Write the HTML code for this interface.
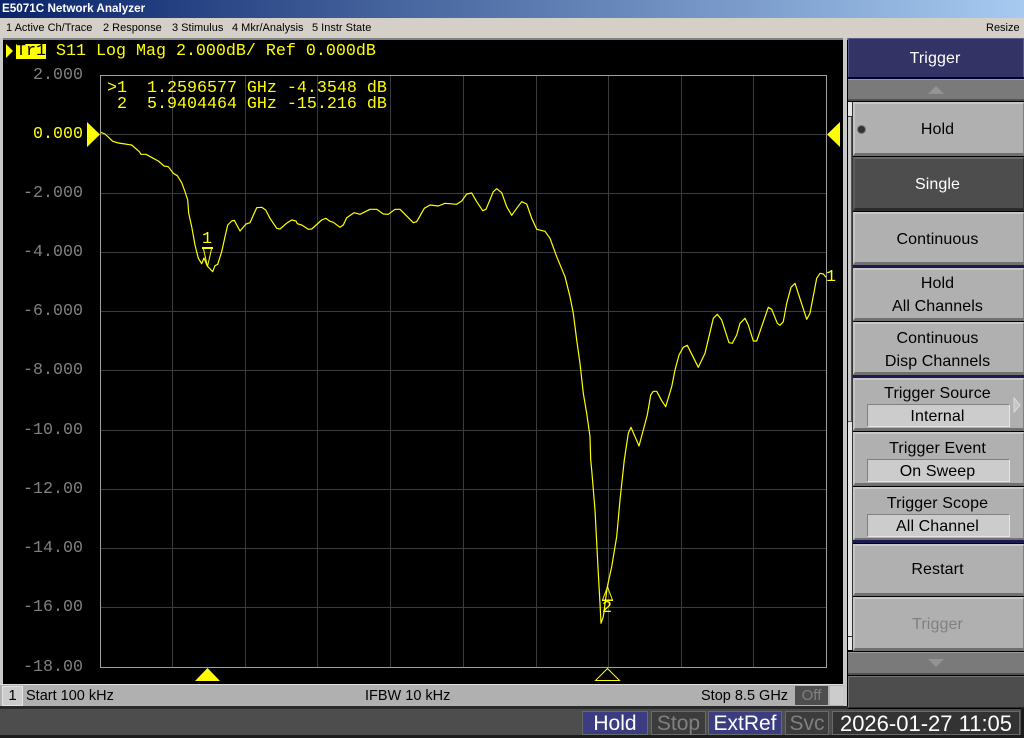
<!DOCTYPE html>
<html><head><meta charset="utf-8"><title>E5071C Network Analyzer</title>
<style>
html,body{margin:0;padding:0;width:1024px;height:738px;overflow:hidden;background:#000}
body{position:relative;font-family:"Liberation Sans",sans-serif}
div{position:absolute;box-sizing:border-box}
.t{white-space:pre;line-height:20px;height:20px}
.m{font-family:"Liberation Mono",monospace;font-size:16.667px;white-space:pre;line-height:16px;height:16px;color:#ffff00;margin-top:1px}
.a{font-family:"Liberation Mono",monospace;font-size:16.667px;white-space:pre;line-height:16px;height:16px;color:#808080;width:60px;right:941px;text-align:right;margin-top:1px}
.b{left:853px;width:171px;background:#b0b0b0;border-top:2px solid #c8c8c8;border-left:2px solid #c4c4c4;border-bottom:3px solid #707070;border-right:1px solid #808080}
.l{left:852px;width:171px;text-align:center;font-size:16px;letter-spacing:.1px;color:#000;white-space:pre;line-height:20px;height:20px}
.v{left:867px;width:143px;height:23px;background:#cccccc;border-top:1px solid #808080;border-left:1px solid #808080;border-bottom:1px solid #e6e6e6;border-right:1px solid #e6e6e6}
.s{top:711px;height:24px;border:1px solid #6a6a6a;font-size:21px;line-height:24px;text-align:center;white-space:pre}
</style></head><body>
<div style="left:0;top:0;width:1024px;height:18px;background:linear-gradient(90deg,#0a246a 0%,#a6caf0 100%)"></div>
<div class="t" style="left:2px;top:-1px;color:#fff;font-weight:bold;font-size:11.7px">E5071C Network Analyzer</div>
<div style="left:0;top:18px;width:1024px;height:20px;background:#d4d0c8"></div>
<div class="t" style="left:6px;top:18px;font-size:11px;color:#000">1 Active Ch/Trace</div>
<div class="t" style="left:103px;top:18px;font-size:11px;color:#000">2 Response</div>
<div class="t" style="left:172px;top:18px;font-size:11px;color:#000">3 Stimulus</div>
<div class="t" style="left:232px;top:18px;font-size:11px;color:#000">4 Mkr/Analysis</div>
<div class="t" style="left:312px;top:18px;font-size:11px;color:#000">5 Instr State</div>
<div class="t" style="left:986px;top:18px;font-size:11px;color:#000">Resize</div>

<div style="left:0;top:38px;width:848px;height:2px;background:#808080"></div>
<div style="left:0;top:38px;width:3px;height:648px;background:#c8c8c8"></div>
<div style="left:843px;top:38px;width:4px;height:648px;background:#c8c8c8"></div>
<div style="left:0;top:684px;width:847px;height:1px;background:#e0e0e0"></div>

<svg style="position:absolute;left:0;top:0" width="1024" height="738" viewBox="0 0 1024 738">
<g stroke="#3c3c3c" stroke-width="1" shape-rendering="crispEdges">
<path d="M172.5 75V667M245.5 75V667M317.5 75V667M390.5 75V667M463.5 75V667M536.5 75V667M608.5 75V667M681.5 75V667M753.5 75V667"/>
<path d="M100 134.500H826M100 193.500H826M100 252.500H826M100 311.500H826M100 370.500H826M100 430.500H826M100 489.500H826M100 548.500H826M100 607.500H826"/>
</g>
<rect x="100.500" y="75.500" width="726" height="592" fill="none" stroke="#a0a0a0" stroke-width="1" shape-rendering="crispEdges"/>
<polyline fill="none" stroke="#ffff00" stroke-width="1.200" stroke-linejoin="round" points="100.700,132.300 105,134 112.700,141.300 118.300,143 125,144 131.700,145 139.300,151.700 141,154.300 146,154.300 153.300,158.300 158.300,161 164,166 168.300,166.700 173.300,173.300 177.300,175.700 181.700,182.700 185,191.700 187.700,200 188.700,213.300 191.700,226.700 195,245 198.300,258.300 201.700,263.700 204,258 207.300,266 212.700,271.700 215,265.700 217.700,264.300 221.700,251.700 225,236.700 227.700,225 231.700,221 234.300,220.300 240,231 246,224 250,222.700 256.700,207.700 261.700,207.300 265.700,210 270,218.300 276.700,228.300 280,229 287.300,222.700 291.700,220 296,221 297.300,223.700 301.700,225 308.300,229.300 311.700,229 321.700,220 325.700,218.300 330,221.300 333.300,222.300 340,227.300 343.300,225 346.700,217.700 354,212.700 360,214.300 370,209.300 376.700,209.300 383.300,214 388.300,214.300 395,209.300 400,209.300 405,214.300 413.300,222.700 416.700,221.700 424.300,208.300 430,205 438.300,206 445,203.300 456.700,204.300 461.700,201 466.700,194 471.700,193 476.700,201.700 482.700,210.700 486,209.300 493.300,191.700 496.700,188.700 501.700,192.700 506.700,206.700 511.700,215.300 516.700,208.300 521.700,201.700 526.700,204 531.700,218.300 536.700,229.300 545,231.300 550,238.300 556.700,256.700 565,276.700 570,296.700 573.300,313.300 576.700,340 580,363.300 583.300,393.300 586.700,413.300 590,436.700 590.700,460 591.700,470 595,510 598.300,573.300 600,603.300 601,623.300 603.300,616.700 607.300,586.700 611.700,566.700 616.700,536.700 620,500 624.300,460 628.300,433.300 631,427.300 639,446 647.300,415 650.700,395 653.300,391.300 656.700,391.300 661.700,400.700 665.700,406.700 671.700,386.700 675,370 679,355 683.300,347.300 687.300,345.300 698.300,367.300 705,353.300 713.300,318.300 717.300,314.300 721.700,320 729,342.700 732.300,343.300 736.700,335 740,323.300 745,318.300 748.300,325 753.300,341 756.700,341 768.300,307.300 771.700,309.300 777.300,323.300 780,325.300 783.300,321.700 786.700,303.300 791,287.300 795,283.300 806.700,319.300 810,313.300 816.700,278.300 820,273.300 823.300,274 826,277.300"/>
<g fill="none" stroke="#ffff00" stroke-width="1">
<path d="M202 248H213" stroke-width="2"/>
<path d="M203.500 249L207.500 266.500L211.500 249"/>
<path d="M607.500 587L602.500 600H612.500ZM602 600.500H613"/>
</g>
<polygon points="87,122 100,134.500 87,147" fill="#ffff00"/>
<polygon points="840,122 827,134.500 840,147" fill="#ffff00"/>
<polygon points="6,44 13,51 6,58" fill="#ffff00"/>
<polygon points="207.500,668 220,681 195,681" fill="#ffff00"/>
<polygon points="607.500,668.500 619.500,680.500 595.500,680.500" fill="none" stroke="#ffff00" stroke-width="1"/>
</svg>

<div style="left:16px;top:44px;width:30px;height:15px;background:#ffff00"></div>
<div class="m" style="left:16px;top:43px;color:#000">Tr1</div>
<div class="m" style="left:56px;top:43px">S11 Log Mag 2.000dB/ Ref 0.000dB</div>
<div class="a" style="top:67px">2.000</div>
<div class="a" style="top:126px;color:#ffff00">0.000</div>
<div class="a" style="top:185px">-2.000</div>
<div class="a" style="top:244px">-4.000</div>
<div class="a" style="top:303px">-6.000</div>
<div class="a" style="top:362px">-8.000</div>
<div class="a" style="top:422px">-10.00</div>
<div class="a" style="top:481px">-12.00</div>
<div class="a" style="top:540px">-14.00</div>
<div class="a" style="top:599px">-16.00</div>
<div class="a" style="top:659px">-18.00</div>
<div class="m" style="left:107px;top:80px">&gt;1  1.2596577 GHz -4.3548 dB</div>
<div class="m" style="left:107px;top:96px"> 2  5.9404464 GHz -15.216 dB</div>
<div class="m" style="left:202px;top:231px">1</div>
<div class="m" style="left:602px;top:600px">2</div>
<div class="m" style="left:826px;top:269px">1</div>

<div style="left:0;top:685px;width:847px;height:21px;background:#b0b0b0"></div>
<div style="left:2px;top:686px;width:21px;height:20px;background:#cccccc;border:1px solid #e4e4e4;font-size:15px;line-height:18px;text-align:center;color:#000">1</div>
<div class="t" style="left:26px;top:686px;font-size:14.5px;color:#000">Start 100 kHz</div>
<div class="t" style="left:365px;top:686px;font-size:14.5px;color:#000">IFBW 10 kHz</div>
<div class="t" style="left:701px;top:686px;font-size:14.5px;color:#000">Stop 8.5 GHz</div>
<div style="left:795px;top:686px;width:33px;height:19px;background:#4d4d4d;font-size:15px;line-height:19px;text-align:center;color:#808080">Off</div>
<div style="left:830px;top:686px;width:13px;height:19px;background:#cccccc"></div>
<div style="left:843px;top:684px;width:4px;height:22px;background:#c8c8c8"></div>

<div style="left:848px;top:38px;width:176px;height:39px;background:#333366;border:1px solid #5a5a90;border-bottom:0"></div>
<div style="left:848px;top:77px;width:176px;height:2px;background:#000033"></div>
<div class="l" style="left:848px;top:49px;width:174px;color:#fff">Trigger</div>
<div style="left:848px;top:79px;width:176px;height:22px;background:#7a7a7a;border-top:1px solid #9a9a9a;border-bottom:2px solid #505050"></div>
<svg style="position:absolute;left:927px;top:85px" width="18" height="10"><polygon points="1,9 9,1 17,9" fill="#939393"/></svg>

<div style="left:848px;top:102px;width:5px;height:548px;background:#e4e4e4;border-right:1px solid #333"></div>
<div style="left:848px;top:102px;width:4px;height:320px;background:#c8c8c8;border-right:1px solid #555;border-bottom:1px solid #555"></div>
<div style="left:848px;top:102px;width:4px;height:15px;background:#e8e8e8;border-bottom:1px solid #333"></div>
<div style="left:848px;top:636px;width:4px;height:14px;background:#e8e8e8;border-top:1px solid #333"></div>

<div class="b" style="top:102px;height:54px"></div>
<div class="b" style="top:157px;height:54px;background:#4d4d4d;border-top-color:#6a6a6a;border-left-color:#5c5c5c;border-bottom-color:#2c2c2c;border-right-color:#333"></div>
<div class="b" style="top:212px;height:53px"></div>
<div style="left:853px;top:265px;width:171px;height:3px;background:#1a1a50"></div>
<div class="b" style="top:268px;height:53px"></div>
<div class="b" style="top:322px;height:53px"></div>
<div style="left:853px;top:375px;width:171px;height:3px;background:#1a1a50"></div>
<div class="b" style="top:378px;height:53px"></div>
<div class="b" style="top:432px;height:54px"></div>
<div class="b" style="top:487px;height:54px"></div>
<div style="left:853px;top:540px;width:171px;height:3px;background:#1a1a50"></div>
<div class="b" style="top:544px;height:52px"></div>
<div class="b" style="top:597px;height:54px"></div>

<div style="left:858px;top:126px;width:7px;height:7px;border-radius:50%;background:#333;box-shadow:0 0 0 1px #777"></div>
<div class="l" style="top:120px">Hold</div>
<div class="l" style="top:175px;color:#fff">Single</div>
<div class="l" style="top:230px">Continuous</div>
<div class="l" style="top:274px">Hold</div>
<div class="l" style="top:297px">All Channels</div>
<div class="l" style="top:329px">Continuous</div>
<div class="l" style="top:352px">Disp Channels</div>
<div class="l" style="top:384px">Trigger Source</div>
<div class="v" style="top:404px"></div>
<div class="l" style="top:407px">Internal</div>
<svg style="position:absolute;left:1013px;top:397px" width="9" height="16"><polygon points="1,1 7,8 1,15" fill="#c4c4c4" stroke="#dcdcdc"/></svg>
<div class="l" style="top:439px">Trigger Event</div>
<div class="v" style="top:459px"></div>
<div class="l" style="top:462px">On Sweep</div>
<div class="l" style="top:494px">Trigger Scope</div>
<div class="v" style="top:514px"></div>
<div class="l" style="top:517px">All Channel</div>
<div class="l" style="top:560px">Restart</div>
<div class="l" style="top:615px;color:#808080">Trigger</div>

<div style="left:848px;top:652px;width:176px;height:23px;background:#7a7a7a;border-top:1px solid #9a9a9a;border-bottom:2px solid #505050"></div>
<svg style="position:absolute;left:927px;top:658px" width="18" height="10"><polygon points="1,1 17,1 9,9" fill="#939393"/></svg>
<div style="left:848px;top:676px;width:176px;height:32px;background:#4d4d4d;border-top:1px solid #777;border-left:1px solid #777;border-bottom:1px solid #2c2c2c"></div>

<div style="left:0;top:706px;width:848px;height:3px;background:#2a2a2a"></div>
<div style="left:0;top:709px;width:1024px;height:26px;background:#4d4d4d"></div>
<div style="left:0;top:735px;width:1024px;height:3px;background:#1c1c1c"></div>
<div style="left:1021px;top:708px;width:3px;height:30px;background:#1c1c1c"></div>
<div class="s" style="left:582px;width:66px;background:#3c3c80;color:#fff">Hold</div>
<div class="s" style="left:651px;width:55px;background:#3c3c3c;color:#808080">Stop</div>
<div class="s" style="left:708px;width:74px;background:#3c3c80;color:#fff">ExtRef</div>
<div class="s" style="left:785px;width:44px;background:#3c3c3c;color:#808080">Svc</div>
<div class="s" style="left:832px;width:188px;background:#333;color:#fff;font-size:22px">2026-01-27 11:05</div>
</body></html>
